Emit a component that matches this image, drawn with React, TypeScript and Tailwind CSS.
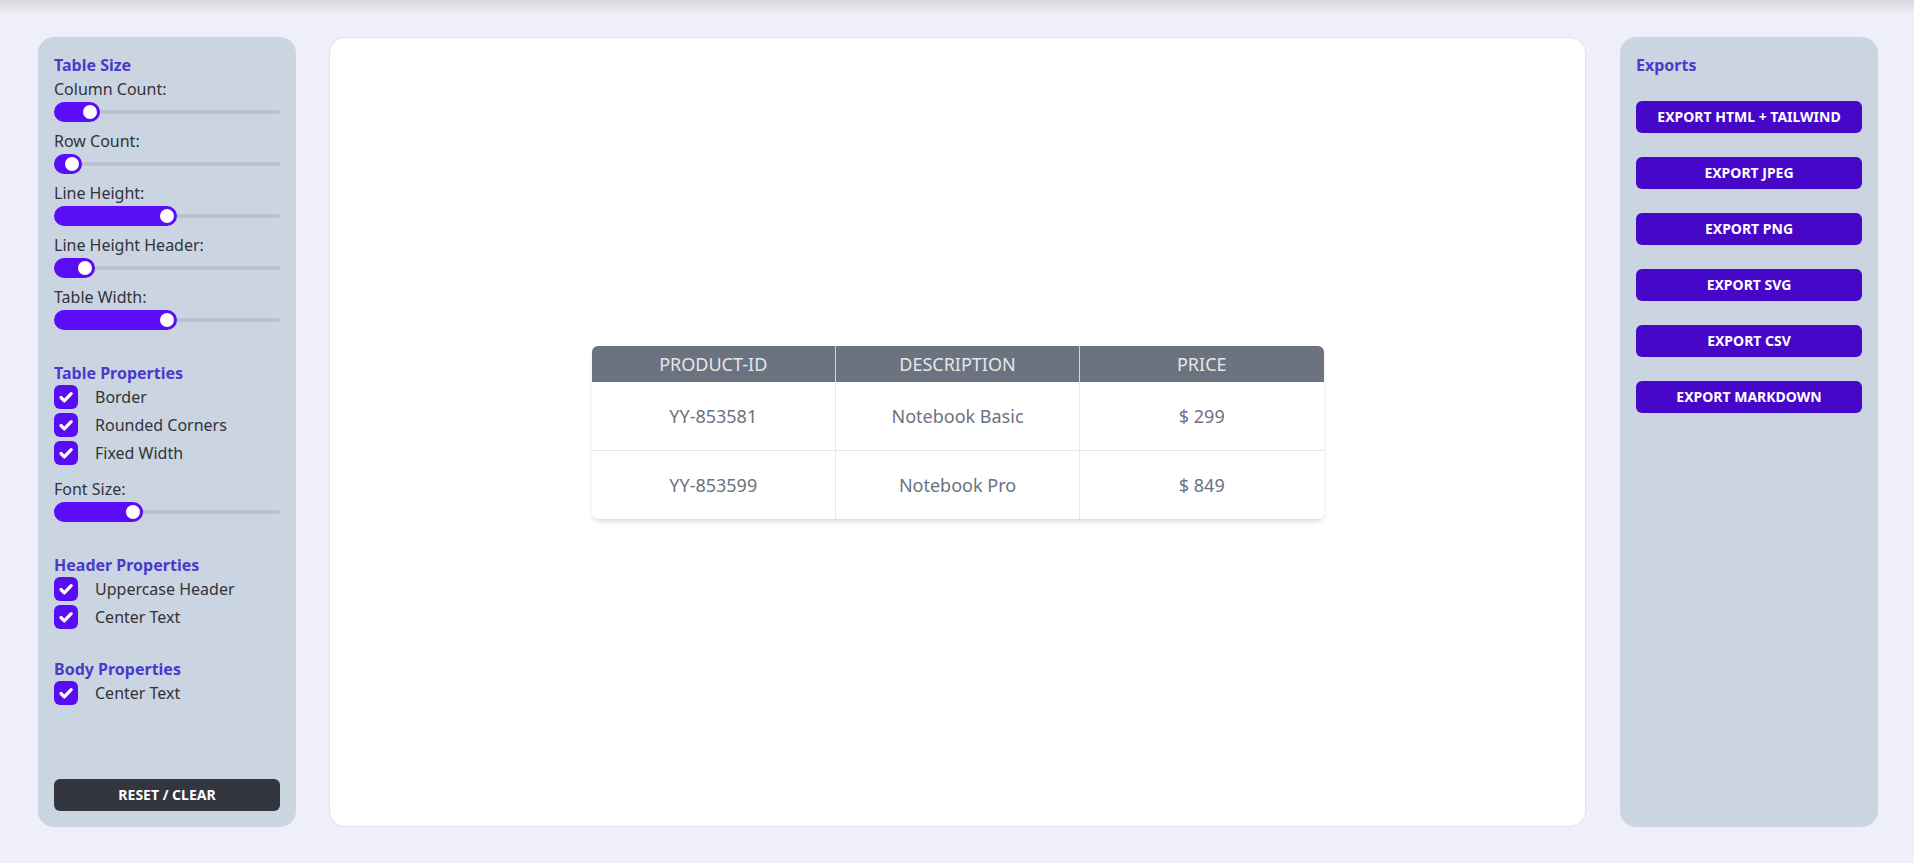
import React from "react";

const sizeSliders = [
  { label: "Column Count:", fill: 46 },
  { label: "Row Count:", fill: 28 },
  { label: "Line Height:", fill: 123 },
  { label: "Line Height Header:", fill: 41 },
  { label: "Table Width:", fill: 123 },
];

const exportsList = [
  "Export HTML + Tailwind",
  "Export JPEG",
  "Export PNG",
  "Export SVG",
  "Export CSV",
  "Export Markdown",
];

const rows = [
  { id: "YY-853581", desc: "Notebook Basic", price: "$ 299" },
  { id: "YY-853599", desc: "Notebook Pro", price: "$ 849" },
];

function Slider({ label, fill }: { label: string; fill: number }) {
  return (
    <div className="mb-[6px]">
      <div className="h-6 pt-[3px] text-base leading-[21px] text-[#30333b]">{label}</div>
      <div className="relative mt-[2px] h-5 w-full">
        <div className="absolute inset-x-0 top-[8px] h-1 rounded-full bg-[#b9c2ce]" />
        <div
          className="absolute left-0 top-0 h-5 rounded-full bg-[#590df5]"
          style={{ width: fill }}
        />
        <div
          className="absolute top-[1px] h-[18px] w-[18px] rounded-full border-2 border-[#590df5] bg-white"
          style={{ left: fill - 19 }}
        />
      </div>
    </div>
  );
}

function Check({ label }: { label: string }) {
  return (
    <div className="flex h-6 items-center">
      <div className="flex h-6 w-6 items-center justify-center rounded-md bg-[#590df5]">
        <svg width="24" height="24" viewBox="0 0 24 24" fill="none">
          <path
            d="M7 12.5l3.3 3.3L17.2 8.6"
            stroke="white"
            strokeWidth="3.2"
            strokeLinecap="round"
            strokeLinejoin="round"
          />
        </svg>
      </div>
      <span className="ml-[17px] text-base leading-6 text-[#30333b]">{label}</span>
    </div>
  );
}

function Heading({ children }: { children: React.ReactNode }) {
  return (
    <div className="h-6 pt-[3px] text-base font-bold leading-[21px] text-[#4a3acb]">
      {children}
    </div>
  );
}

export default function App() {
  return (
    <div
      className="flex h-[863px] flex-col bg-[#eeeff8]"
      style={{ fontFamily: '"Noto Sans", "Open Sans", sans-serif' }}
    >
      <div className="h-[14px] bg-gradient-to-b from-[#d7d7dc] to-[#eeeff8]" />
      <div className="flex flex-1 pb-9 pl-[38px] pr-9 pt-[23px]">
        {/* settings */}
        <aside className="flex w-[258px] flex-col rounded-2xl bg-[#cbd5e1] px-4 pb-4 pt-[15px]">
          <Heading>Table Size</Heading>
          {sizeSliders.map((s) => (
            <Slider key={s.label} label={s.label} fill={s.fill} />
          ))}

          <div className="mt-6">
            <Heading>Table Properties</Heading>
          </div>
          <div className="mt-px flex flex-col gap-1">
            <Check label="Border" />
            <Check label="Rounded Corners" />
            <Check label="Fixed Width" />
          </div>
          <div className="mt-[11px]">
            <Slider label="Font Size:" fill={89} />
          </div>

          <div className="mt-[24px]">
            <Heading>Header Properties</Heading>
          </div>
          <div className="mt-px flex flex-col gap-1">
            <Check label="Uppercase Header" />
            <Check label="Center Text" />
          </div>

          <div className="mt-[27px]">
            <Heading>Body Properties</Heading>
          </div>
          <div className="mt-px">
            <Check label="Center Text" />
          </div>

          <button className="mt-auto h-8 w-full rounded-md bg-[#33363f] text-sm font-bold uppercase text-white">
            Reset / Clear
          </button>
        </aside>

        {/* preview */}
        <main className="ml-[33px] mr-[34px] flex flex-1 items-center justify-center rounded-2xl border border-[#e2e3ea] bg-white">
          <div className="overflow-hidden rounded-md shadow-md">
            <table className="w-[732px] table-fixed border-collapse text-lg">
              <thead>
                <tr className="bg-[#6b7280] text-[#e5e7eb]">
                  <th className="px-4 py-1 font-normal leading-7">PRODUCT-ID</th>
                  <th className="border-l border-[#d1d5db] px-4 py-1 font-normal leading-7">
                    DESCRIPTION
                  </th>
                  <th className="border-l border-[#d1d5db] px-4 py-1 font-normal leading-7">
                    PRICE
                  </th>
                </tr>
              </thead>
              <tbody className="text-[#6b7280]">
                {rows.map((r, i) => (
                  <tr key={r.id} className={i > 0 ? "border-t border-[#e5e7eb]" : ""}>
                    <td className="px-4 py-5 text-center leading-7">{r.id}</td>
                    <td className="border-l border-[#e5e7eb] px-4 py-5 text-center leading-7">
                      {r.desc}
                    </td>
                    <td className="border-l border-[#e5e7eb] px-4 py-5 text-center leading-7">
                      {r.price}
                    </td>
                  </tr>
                ))}
              </tbody>
            </table>
          </div>
        </main>

        {/* exports */}
        <aside className="flex w-[258px] flex-col rounded-2xl bg-[#cbd5e1] px-4 pb-4 pt-[15px]">
          <Heading>Exports</Heading>
          <div className="mt-[25px] flex flex-col gap-6">
            {exportsList.map((e) => (
              <button
                key={e}
                className="h-8 w-full rounded-md bg-[#4607c9] text-sm font-bold uppercase text-white"
              >
                {e}
              </button>
            ))}
          </div>
        </aside>
      </div>
    </div>
  );
}
